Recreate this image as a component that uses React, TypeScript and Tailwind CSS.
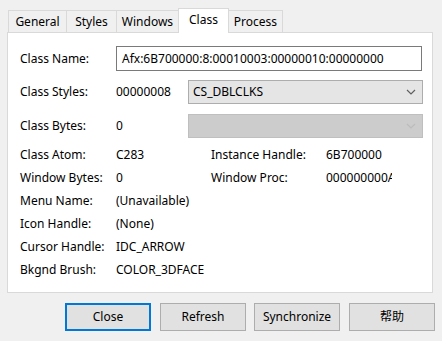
const tabs = ["General", "Styles", "Windows", "Class", "Process"]
const tabW = [59, 51, 63, 51, 55]

const Chevron = ({ color }: { color: string }) => (
  <svg width="10" height="6" viewBox="0 0 10 6" className="mr-[6px]">
    <path d="M1 1 L5 5 L9 1" fill="none" stroke={color} strokeWidth="1.2" />
  </svg>
)

const Row = ({ label, value, label2, value2 }: { label: string; value: string; label2?: string; value2?: string }) => (
  <div className="flex items-center h-[23px]">
    <div className="w-[96px]">{label}</div>
    <div className="w-[95px]">{value}</div>
    {label2 && <div className="w-[115px]">{label2}</div>}
    {value2 && <div className="w-[66px] overflow-hidden whitespace-nowrap">{value2}</div>}
  </div>
)

const App = () => {
  return (
    <div
      className="w-[442px] h-[341px] bg-[#f0f0f0] text-[12px] text-[#000] overflow-hidden"
      style={{ fontFamily: '"Noto Sans", "Noto Sans CJK SC", sans-serif' }}
    >
      <div className="pt-[8px] pl-[7px]">
        <div className="flex items-end h-[24px] pl-[2px]">
          {tabs.map((t, i) => {
            const active = t === "Class"
            return (
              <div
                key={t}
                style={{ width: tabW[i] }}
                className={
                  active
                    ? "h-[25px] -mb-px -ml-px bg-white border border-b-0 border-[#d9d9d9] flex justify-center pt-[2px] relative z-10"
                    : "h-[22px] bg-[#f0f0f0] border border-b-0 border-[#d9d9d9] -ml-px flex items-center justify-center"
                }
              >
                {t}
              </div>
            )
          })}
        </div>
        <div className="w-[426px] h-[261px] bg-white border border-[#d9d9d9] pl-[12px] pt-[13px]">
          <div className="flex items-center h-[25px]">
            <div className="w-[96px]">Class Name:</div>
            <div className="w-[306px] h-[25px] border border-[#7a7a7a] flex items-center pl-[5px]">
              Afx:6B700000:8:00010003:00000010:00000000
            </div>
          </div>
          <div className="flex items-center h-[24px] mt-[9px]">
            <div className="w-[96px]">Class Styles:</div>
            <div className="w-[72px]">00000008</div>
            <div className="w-[235px] h-[24px] bg-[#e5e5e5] border border-[#adadad] flex items-center justify-between pl-[4px]">
              <span>CS_DBLCLKS</span>
              <Chevron color="#606060" />
            </div>
          </div>
          <div className="flex items-center h-[24px] mt-[10px]">
            <div className="w-[96px]">Class Bytes:</div>
            <div className="w-[72px]">0</div>
            <div className="w-[235px] h-[24px] bg-[#cccccc] border border-[#bfbfbf] flex items-center justify-end">
              <Chevron color="#bcbcbc" />
            </div>
          </div>
          <div className="mt-[5px]">
            <Row label="Class Atom:" value="C283" label2="Instance Handle:" value2="6B700000" />
            <Row label="Window Bytes:" value="0" label2="Window Proc:" value2="000000000A1B2C3D" />
            <Row label="Menu Name:" value="(Unavailable)" />
            <Row label="Icon Handle:" value="(None)" />
            <Row label="Cursor Handle:" value="IDC_ARROW" />
            <Row label="Bkgnd Brush:" value="COLOR_3DFACE" />
          </div>
        </div>
      </div>
      <div className="flex mt-[10px] pl-[65px]">
        <button className="w-[86px] h-[28px] bg-[#e1e1e1] border-2 border-[#0078d7]">Close</button>
        <button className="w-[86px] h-[28px] bg-[#e1e1e1] border border-[#adadad] ml-[9px]">Refresh</button>
        <button className="w-[86px] h-[28px] bg-[#e1e1e1] border border-[#adadad] ml-[8px]">Synchronize</button>
        <button className="w-[86px] h-[28px] bg-[#e1e1e1] border border-[#adadad] ml-[9px]">帮助</button>
      </div>
    </div>
  )
}

export default App
